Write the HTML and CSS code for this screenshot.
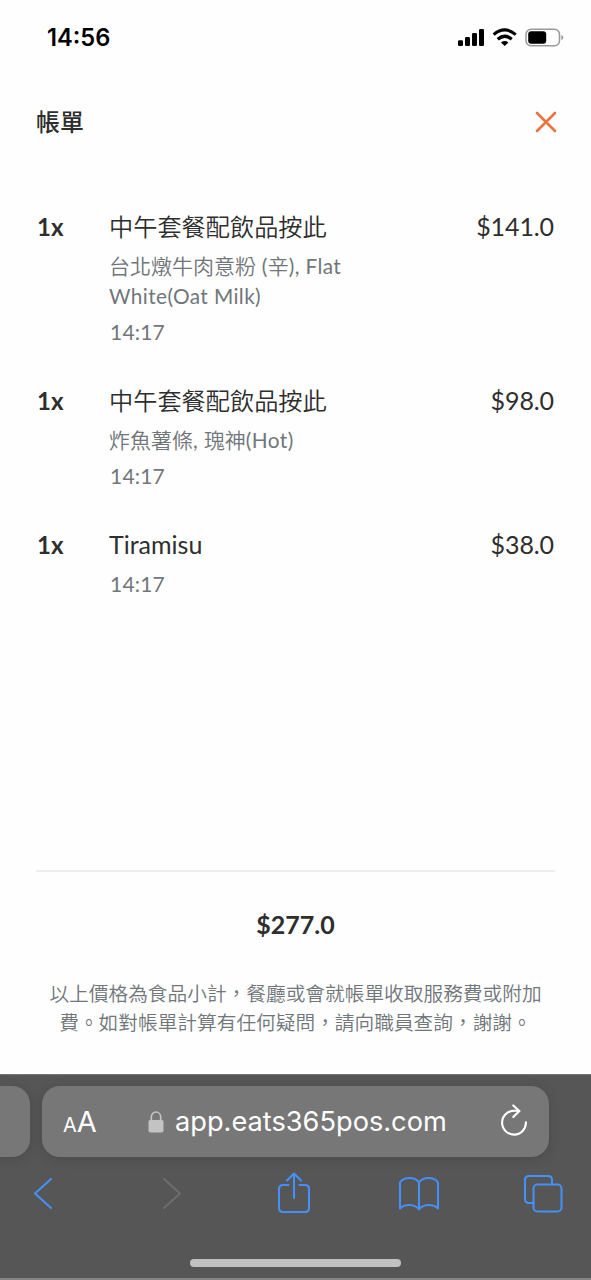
FILE: index.html
```html
<!DOCTYPE html>
<html lang="zh-Hant">
<head>
<meta charset="utf-8">
<title>帳單</title>
<link rel="stylesheet" href="styles.css">
</head>
<body>
<div class="phone">
  <header class="status">
    <span class="clock">14:56</span>
    <svg class="status-icons" width="108" height="20" viewBox="0 0 108 20">
      <g fill="#000">
        <rect x="1" y="12.300" width="5" height="5.700" rx="1.300"/>
        <rect x="8" y="9" width="5" height="9" rx="1.300"/>
        <rect x="15" y="5" width="5" height="13" rx="1.300"/>
        <rect x="22" y="1" width="5" height="17" rx="1.300"/>
        <path d="M47.700 18L44 14.400Q47.700 11.600 51.400 14.400Z"/>
      </g>
      <g fill="none" stroke="#000" stroke-width="3.200">
        <path d="M36.700 6.600Q47.700 -2.700 58.700 6.600"/>
        <path d="M40.700 11.200Q47.700 5.300 54.700 11.200"/>
      </g>
      <rect x="69" y="1.200" width="33.500" height="16.600" rx="5" fill="none" stroke="#999" stroke-width="1.500"/>
      <rect x="71.200" y="3.300" width="18" height="12.400" rx="3" fill="#000"/>
      <path d="M104.300 7q2 .6 2 2.500t-2 2.500z" fill="#999"/>
    </svg>
  </header>

  <main class="bill">
    <div class="bill-head">
      <h1 class="bill-title">帳單</h1>
      <svg class="close" width="22" height="22" viewBox="0 0 22 22"><path d="M2 2L20 20M20 2L2 20"/></svg>
    </div>

    <ul class="items">
      <li class="item">
        <span class="qty">1x</span>
        <div class="info">
          <p class="name name-zh">中午套餐配飲品按此</p>
          <p class="desc">台北燉牛肉意粉<span class="en"> (</span>辛<span class="en">), Flat<br>White(Oat Milk)</span></p>
          <p class="time">14:17</p>
        </div>
        <span class="price">$141.0</span>
      </li>
      <li class="item">
        <span class="qty">1x</span>
        <div class="info">
          <p class="name name-zh">中午套餐配飲品按此</p>
          <p class="desc">炸魚薯條<span class="en">, </span>瑰神<span class="en">(Hot)</span></p>
          <p class="time">14:17</p>
        </div>
        <span class="price">$98.0</span>
      </li>
      <li class="item">
        <span class="qty">1x</span>
        <div class="info">
          <p class="name">Tiramisu</p>
          <p class="time">14:17</p>
        </div>
        <span class="price">$38.0</span>
      </li>
    </ul>

    <footer class="summary">
      <p class="total">$277.0</p>
      <p class="note">以上價格為食品小計，餐廳或會就帳單收取服務費或附加<br>費。如對帳單計算有任何疑問，請向職員查詢，謝謝。</p>
    </footer>
  </main>

  <nav class="browser">
    <div class="tabs">
      <div class="tab-prev"></div>
      <div class="address">
        <span class="aa"><small class="aa-small">A</small>A</span>
        <span class="site">
          <svg width="16" height="22" viewBox="0 0 16 22"><rect x=".5" y="9" width="15" height="12.500" rx="1.800" fill="#c3c3c3"/><path d="M3.300 10V6a4.700 5 0 0 1 9.400 0v4" fill="none" stroke="#c3c3c3" stroke-width="1.700"/></svg>
          <span class="url">app.eats365pos.com</span>
        </span>
        <svg class="reload" width="28" height="32" viewBox="0 0 28 32"><path d="M17.500 4.800H14A11.900 11.900 0 1 0 25.900 16.400M13.300 -.6L19.300 5L13.300 10.900"/></svg>
      </div>
    </div>
    <div class="tools">
      <svg width="20" height="44" viewBox="0 0 20 44"><path d="M18 8L2 22.500L18 37"/></svg>
      <svg class="disabled" width="20" height="44" viewBox="0 0 20 44"><path d="M2 8L18 22.500L2 37"/></svg>
      <svg width="34" height="44" viewBox="0 0 34 44"><path d="M11.500 14H6Q2 14 2 18V37Q2 41 6 41H28Q32 41 32 37V18Q32 14 28 14H22.500M17 27V2.500M10 9.500L17 2.500L24 9.500"/></svg>
      <svg width="42" height="44" viewBox="0 0 42 44"><path d="M21 38.500C17 33 7 32.500 2 37.500V11.500C6 5.500 17 5.500 21 11.500C25 5.500 36 5.500 40 11.500V37.500C35 32.500 25 33 21 38.500V11.500"/></svg>
      <svg width="40" height="44" viewBox="0 0 40 44"><path d="M10.500 32H6Q2 32 2 28V9Q2 5 6 5H25Q29 5 29 9V13.500"/><rect x="10.500" y="13.500" width="28" height="27" rx="4"/></svg>
    </div>
    <div class="home-bar"></div>
  </nav>
</div>
</body>
</html>
```
FILE: styles.css
```css
* { box-sizing: border-box; margin: 0; padding: 0; }

body { background: #fefefe; }

.phone {
  width: 591px;
  height: 1280px;
  display: flex;
  flex-direction: column;
  overflow: hidden;
  background: #fefefe;
  color: #2e2e2e;
  font-family: Lato, "Noto Sans CJK TC", sans-serif;
}

.status {
  height: 76px;
  padding: 0 26px 0 47px;
  display: flex;
  justify-content: space-between;
  align-items: center;
}

.clock {
  font: 600 23.7px/28px Inter, sans-serif;
  color: #000;
}

.bill {
  flex: 1;
  padding: 0 37px;
  display: flex;
  flex-direction: column;
}

.bill-head {
  height: 92px;
  display: flex;
  justify-content: space-between;
  align-items: center;
}

.bill-title {
  margin-left: -1px;
  font-size: 23.9px;
  line-height: 36px;
  font-weight: 500;
}

.close {
  margin-right: -2.5px;
  fill: none;
  stroke: #e87440;
  stroke-width: 2.6;
  stroke-linecap: round;
}

.items {
  flex: 1;
  margin-top: 41px;
  list-style: none;
  display: flex;
  flex-direction: column;
  gap: 36px;
}

.item {
  display: grid;
  grid-template-columns: 72px 1fr auto;
  align-items: start;
}

.qty { font-size: 24px; line-height: 36px; font-weight: 700; }

.info { display: flex; flex-direction: column; gap: 6px; }

.name { font-size: 25px; line-height: 35px; padding-bottom: 1px; }
.name-zh { font-size: 24.2px; font-weight: 350; line-height: 36px; padding: 0; }

.desc, .time { color: #70767a; line-height: 30px; }
.desc { font-size: 21px; font-weight: 350; }
.en { font-size: 20.8px; font-weight: 400; letter-spacing: 0.4px; }
.time { padding-left: 1px; font-size: 21px; letter-spacing: 0.2px; }

.price { font-size: 25px; line-height: 35px; letter-spacing: -0.1px; }

.summary {
  height: 204px;
  border-top: 2px solid #eee;
  text-align: center;
  margin: 0 -1px;
}

.total { margin-top: 34px; font-size: 25px; line-height: 36px; font-weight: 700; }

.note {
  margin-top: 37px;
  font-size: 19.7px;
  line-height: 29px;
  font-weight: 350;
  color: #70767a;
  white-space: nowrap;
}

.browser {
  height: 206px;
  background: #565656;
  border-top: 1px solid #777;
  border-bottom: 2px solid #858585;
  display: flex;
  flex-direction: column;
}

.tabs { display: flex; gap: 12px; padding-top: 11px; }

.tab-prev {
  width: 30px;
  height: 71px;
  border-radius: 0 18px 18px 0;
  background: #777;
  box-shadow: 0 2px 12px #0002;
}

.address {
  width: 507px;
  height: 71px;
  padding: 0 21px;
  border-radius: 18px;
  background: #777;
  box-shadow: 0 2px 12px #0002;
  color: #fff;
  font-family: Inter, sans-serif;
  display: flex;
  justify-content: space-between;
  align-items: center;
}

.aa { font-size: 29px; }
.aa-small { font-size: 20px; }

.site { display: flex; align-items: center; gap: 11px; margin-left: -2px; }
.url { font-size: 27.2px; line-height: 36px; padding-top: 1px; }

.reload { overflow: visible; fill: none; stroke: #fff; stroke-width: 2.1; stroke-linecap: round; }

.tools {
  margin-top: 14px;
  padding-left: 33px;
  display: grid;
  grid-template-columns: 129px 115px 121px 125px 1fr;
  fill: none;
  stroke: #4490f7;
  stroke-width: 2.1;
  stroke-linecap: round;
  stroke-linejoin: round;
}

.disabled { stroke: #6d6d6d; }

.home-bar {
  width: 211px;
  height: 8px;
  margin: auto auto 11px 190px;
  border-radius: 4px;
  background: #c1c1c1;
}
```
